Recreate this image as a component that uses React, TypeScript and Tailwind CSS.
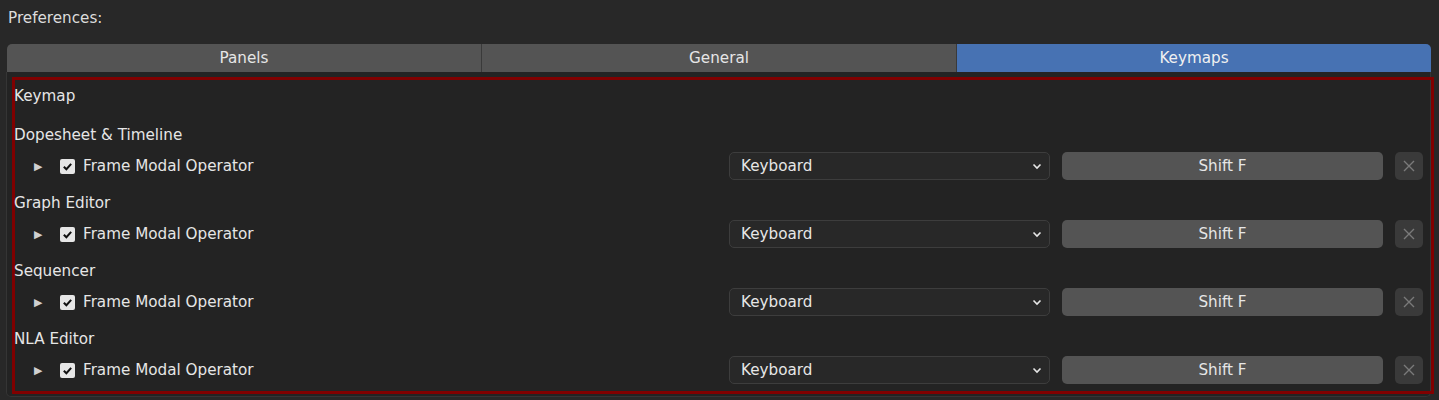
import React from 'react';

const sections = ['Dopesheet & Timeline', 'Graph Editor', 'Sequencer', 'NLA Editor'];
const tabs = ['Panels', 'General', 'Keymaps'];

function KeymapRow() {
  return (
    <div className="flex h-[36px] items-start">
      <div className="mt-[1px] flex h-[28px] flex-1 items-center">
        <span className="ml-[19px] w-[10px] text-[11px] leading-none text-[#d0d0d0]">▶</span>
        <span className="ml-[16px] flex h-[15px] w-[15px] items-center justify-center rounded-[2px] bg-[#e6e6e6]">
          <svg width="11" height="11" viewBox="0 0 12 12">
            <path d="M2 6.2 L4.8 9 L10 3.2" fill="none" stroke="#111" strokeWidth="2.2" />
          </svg>
        </span>
        <span className="ml-[8px] text-[#e6e6e6]">Frame Modal Operator</span>
      </div>
      <div className="mt-[1px] flex h-[28px] w-[321px] items-center justify-between rounded-[5px] border border-[#3d3d3d] bg-[#282828] pl-[11px] pr-[6px] text-[#e6e6e6]">
        <span>Keyboard</span>
        <svg width="12" height="12" viewBox="0 0 12 12">
          <path d="M2.5 4.5 L6 8 L9.5 4.5" fill="none" stroke="#e6e6e6" strokeWidth="1.6" />
        </svg>
      </div>
      <div className="ml-[12px] mt-[1px] flex h-[28px] w-[321px] items-center justify-center rounded-[5px] bg-[#545454] text-[#e6e6e6]">
        Shift F
      </div>
      <div className="ml-[12px] mt-[1px] flex h-[28px] w-[28px] items-center justify-center rounded-[5px] bg-[#3a3a3a]">
        <svg width="14" height="14" viewBox="0 0 14 14">
          <path d="M2 2 L12 12 M12 2 L2 12" stroke="#7a7a7a" strokeWidth="1.4" />
        </svg>
      </div>
    </div>
  );
}

export default function App() {
  return (
    <div
      className="h-[400px] w-[1439px] bg-[#282828] pl-[6px] pr-[8px] text-[15.2px]"
      style={{ fontFamily: '"DejaVu Sans", sans-serif' }}
    >
      <div className="flex h-[44px] items-center pb-[8px] pl-[2px] text-[#dcdcdc]">Preferences:</div>
      <div className="ml-[1px] flex h-[28px] overflow-hidden rounded-t-[5px]">
        {tabs.map((t, i) => (
          <div
            key={t}
            className={
              i === 2
                ? 'flex flex-1 items-center justify-center bg-[#4772b3] text-[#f0f0f0]'
                : 'flex flex-1 items-center justify-center border-r border-[#3a3a3a] bg-[#545454] text-[#e6e6e6]'
            }
          >
            {t}
          </div>
        ))}
      </div>
      <div className="h-[325px] rounded-b-[5px] border border-t-0 border-[#353535] bg-[#232323] pt-[5px] pl-[5px]">
        <div className="-mr-[4px] h-[317px] border-[3px] border-[#800000] pl-0 pr-[8px]">
          <div className="-ml-[1px] flex h-[32px] items-center text-[#e6e6e6]">Keymap</div>
          <div className="h-[7px]" />
          {sections.map((s) => (
            <div key={s}>
              <div className="-ml-[1px] flex h-[32px] items-center text-[#e6e6e6]">{s}</div>
              <KeymapRow />
            </div>
          ))}
        </div>
      </div>
    </div>
  );
}
